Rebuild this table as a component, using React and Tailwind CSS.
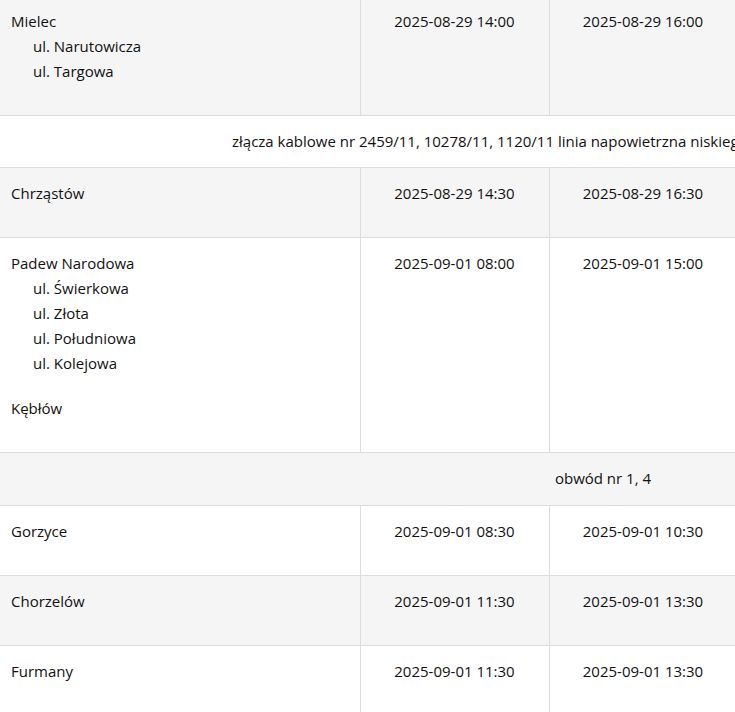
const rows = [
    { type: "place", places: [{ name: "Mielec", streets: ["ul. Narutowicza", "ul. Targowa"] }], from: "2025-08-29 14:00", to: "2025-08-29 16:00" },
    { type: "note", text: "złącza kablowe nr 2459/11, 10278/11, 1120/11 linia napowietrzna niskiego napięcia", left: true },
    { type: "place", places: [{ name: "Chrząstów", streets: [] }], from: "2025-08-29 14:30", to: "2025-08-29 16:30" },
    {
        type: "place",
        places: [
            { name: "Padew Narodowa", streets: ["ul. Świerkowa", "ul. Złota", "ul. Południowa", "ul. Kolejowa"] },
            { name: "Kębłów", streets: [] },
        ],
        from: "2025-09-01 08:00",
        to: "2025-09-01 15:00",
    },
    { type: "note", text: "obwód nr 1, 4" },
    { type: "place", places: [{ name: "Gorzyce", streets: [] }], from: "2025-09-01 08:30", to: "2025-09-01 10:30" },
    { type: "place", places: [{ name: "Chorzelów", streets: [] }], from: "2025-09-01 11:30", to: "2025-09-01 13:30" },
    { type: "place", places: [{ name: "Furmany", streets: [] }], from: "2025-09-01 11:30", to: "2025-09-01 13:30" },
];

const App = () => {
    return (
        <div className="w-full h-[712px] overflow-hidden bg-white text-[15px] leading-[25px] text-[#111111] font-['Open_Sans',sans-serif]">
            <table className="-mt-[4px] w-[1206px] table-fixed border-collapse">
                <colgroup>
                    <col className="w-[360px]" />
                    <col className="w-[189px]" />
                    <col className="w-[188px]" />
                    <col />
                </colgroup>
                <tbody>
                    {rows.map((row, i) => {
                        const bg = i % 2 === 0 ? "bg-[#f5f5f5]" : "bg-white";
                        if (row.type === "note") {
                            return (
                                <tr key={i} className={`${bg} border-b border-[#dddddd]`}>
                                    <td
                                        colSpan={4}
                                        className={
                                            row.left
                                                ? "pt-[13px] pb-[13px] pl-[232px] whitespace-nowrap text-left"
                                                : "pt-[13px] pb-[14px] text-center"
                                        }
                                    >
                                        {row.text}
                                    </td>
                                </tr>
                            );
                        }
                        return (
                            <tr key={i} className={`${bg} border-b border-[#dddddd]`}>
                                {/* miejscowości i ulice */}
                                <td className="align-top pt-[13px] pb-[11px] pl-[11px] pr-3 border-r border-[#dddddd]">
                                    {row.places.map((p) => (
                                        <div key={p.name} className="mb-[20px]">
                                            <div>{p.name}</div>
                                            {p.streets.map((s) => (
                                                <div key={s} className="pl-[22px]">{s}</div>
                                            ))}
                                        </div>
                                    ))}
                                </td>
                                <td className="align-top pt-[13px] pb-[11px] text-center border-r border-[#dddddd]">
                                    <div className="mb-[20px]">{row.from}</div>
                                </td>
                                <td className="align-top pt-[13px] pb-[11px] text-center border-r border-[#dddddd]">
                                    <div className="mb-[20px]">{row.to}</div>
                                </td>
                                <td className="align-top pt-[13px] pb-[11px] text-center"></td>
                            </tr>
                        );
                    })}
                </tbody>
            </table>
        </div>
    );
};

export default App;
